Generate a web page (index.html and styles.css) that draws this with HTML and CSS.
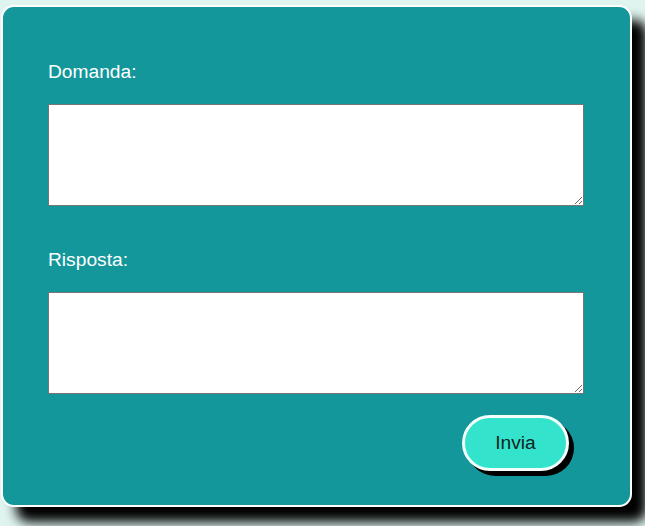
FILE: index.html
```html
<!DOCTYPE html>
<html lang="it">
<head>
<meta charset="utf-8">
<title>Domanda</title>
<link rel="stylesheet" href="styles.css">
</head>
<body>
<form class="card">
  <label class="label" for="q">Domanda:</label>
  <textarea id="q" class="field"></textarea>
  <label class="label label-second" for="a">Risposta:</label>
  <textarea id="a" class="field"></textarea>
  <button type="button" class="send">Invia</button>
</form>
</body>
</html>
```

FILE: styles.css
```css
html, body {
  margin: 0;
  padding: 0;
}
body {
  background: #dff3ef;
  font-family: "Liberation Sans", Arial, sans-serif;
  padding: 5px 0 0 1px;
  height: 526px;
  box-sizing: border-box;
  overflow: hidden;
}
.card {
  width: 631px;
  height: 502px;
  box-sizing: border-box;
  background: #13979a;
  border: 2px solid #ffffff;
  border-radius: 13px;
  box-shadow: 15px 15px 12px #000;
  padding: 54px 45px 0 45px;
  display: flex;
  flex-direction: column;
  align-items: flex-start;
}
.label {
  color: #ffffff;
  font-size: 19.2px;
  line-height: 22px;
}
.label-second {
  margin-top: 43px;
}
.field {
  margin: 21px 0 0 0;
  width: 536px;
  height: 102px;
  box-sizing: border-box;
  border: 1px solid #767676;
  background: #fff;
  padding: 2px;
  font-family: "Liberation Mono", monospace;
}
.send {
  align-self: flex-end;
  margin: 21px 16px 0 0;
  width: 107px;
  height: 56px;
  box-sizing: border-box;
  background: #34e3cb;
  border: 3px solid #f2fffc;
  border-radius: 28px;
  box-shadow: 5px 5px 0 #000;
  color: #0f2424;
  font-family: "Liberation Sans", Arial, sans-serif;
  font-size: 19.2px;
  line-height: 22px;
  padding: 0;
}
```
